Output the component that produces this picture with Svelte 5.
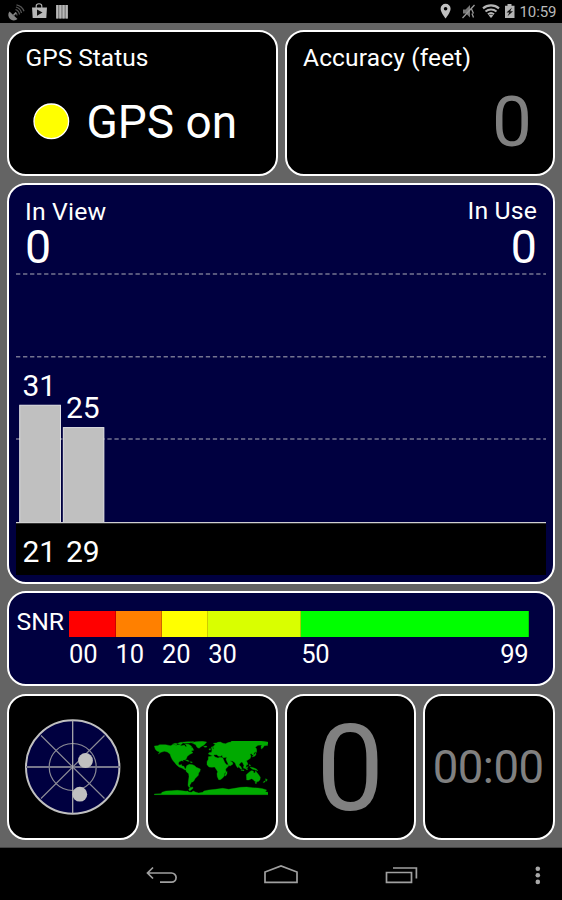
<script>
  const gridLines = [274, 356.8, 439];
  const satellites = [
    { id: '21', snr: '31', x: 19.7, width: 40.8, top: 405.2, textX: 22.4, labelY: 395.6 },
    { id: '29', snr: '25', x: 63.3, width: 40.6, top: 427.6, textX: 65.9, labelY: 418.4 }
  ];
  const scale = [
    { label: '00', color: '#ff0000', span: 46.5 },
    { label: '10', color: '#ff8000', span: 46.5 },
    { label: '20', color: '#ffff00', span: 46.3 },
    { label: '30', color: '#d9ff00', span: 92.9 },
    { label: '50', color: '#00ff00', span: 227.3, end: '99' }
  ];
</script>

<div class="screen">
  <header class="status">
    <svg width="80" height="23" viewBox="0 0 80 23">
      <g fill="none" stroke="#555" stroke-width="1.3">
        <path d="M15.5 12.5A4 4 0 0 1 17 15.5M15.5 9.5a6 6 0 0 1 4 5M16 7a8 8 0 0 1 5.5 6M16.500 4.800a10 10 0 0 1 7.500 6.500" />
      </g>
      <path d="M9.500 11.500A5.500 5.500 0 0 0 17.500 19zM13 14.500l2.500-2.500 1.200 1.200-2.500 2.500z" fill="#858585" />
      <path d="M36.200 8V6a2.800 2.300 0 0 1 5.600 0v2" fill="none" stroke="#b4b4b4" stroke-width="1.100" />
      <path d="M32 7.500h15l-.7 10.500H32.700z" fill="#b8b8b8" />
      <path d="M37 9.500v6.300l5.500-3.200z" fill="#111" />
      <path d="M56.200 5h11.600v13.500H56.200z" fill="#707070" />
      <path d="M56.200 5h2v13.500h-2zM59.300 5h2.100v13.500h-2.100zM62.500 5h2.100v13.500h-2.100zM65.700 5h2.100v13.500h-2.100z" fill="#b8b8b8" />
    </svg>
    <div class="status-right">
      <svg width="80" height="23" viewBox="438 0 80 23">
        <path fill-rule="evenodd" d="M444.600 3.800a5 5 0 0 0-5 5c0 3.700 5 9.700 5 9.700s5-6 5-9.700a5 5 0 0 0-5-5zm0 3.200a1.800 1.800 0 1 1 0 3.600 1.800 1.800 0 0 1 0-3.600z" fill="#c0c0c0" />
        <path d="M462 9.500h2.500l4.500-4.500v12.500l-4-4H462z" fill="#777" />
        <path d="M461.500 18L473.500 5M470.500 9l2 4.500M471 13.500l1.500 4" fill="none" stroke="#999" stroke-width="1.300" />
        <g fill="none" stroke="#b4b4b4" stroke-width="2.100">
          <path d="M482 8.400a12 12 0 0 1 16 0M484.500 11.500a8.500 8.500 0 0 1 11 0M487 14.300a4.600 4.600 0 0 1 6 0" />
        </g>
        <path d="M487.700 15.500a3.400 3.400 0 0 1 4.600 0L490 18z" fill="#b4b4b4" />
        <path d="M506.500 4h4v1.800h3V18h-9.500V5.800h2.500z" fill="#b4b4b4" />
        <path d="M511 7.500l-5.500 5h2.800l-1.800 3.700 5.500-5h-2.800z" fill="#111" />
      </svg>
      <span class="clock">10:59</span>
    </div>
  </header>

  <main>
    <div class="row two">
      <section class="panel gps">
        <div class="title"><span>GPS Status</span></div>
        <div class="state">
          <svg width="37" height="37" viewBox="0 0 37 37"><circle cx="18.300" cy="18.300" r="17.300" fill="#ffff00" stroke="#fff" stroke-width="1.300" /></svg>
          <span>GPS on</span>
        </div>
      </section>
      <section class="panel accuracy">
        <div class="title"><span>Accuracy (feet)</span></div>
        <div class="value">0</div>
      </section>
    </div>

    <section class="panel navy chart">
      <div class="counts">
        <div>
          <div class="title">In View</div>
          <div class="count">0</div>
        </div>
        <div class="in-use">
          <div class="title">In Use</div>
          <div class="count">0</div>
        </div>
      </div>
      <svg width="544" height="312" viewBox="9 270 544 312">
        {#each gridLines as y}
          <line x1="16" x2="546" y1={y} y2={y} stroke="#747490" stroke-width="1.400" stroke-dasharray="4.300 2.730" />
        {/each}
        <rect x="16" y="523" width="530" height="52" fill="#000" />
        {#each satellites as sat}
          <rect x={sat.x} y={sat.top} width={sat.width} height={522.5 - sat.top} fill="#c0c0c0" stroke="#ececec" stroke-width="0.900" />
          <text x={sat.textX} y={sat.labelY}>{sat.snr}</text>
          <text x={sat.textX} y="562.400">{sat.id}</text>
        {/each}
        <path d="M16 522.600H546" stroke="#d0d0d0" stroke-width="1.200" />
      </svg>
    </section>

    <section class="panel navy snr">
      <div class="name">SNR</div>
      <div class="scale">
        {#each scale as part}
          <div class="part" style="flex: {part.span} 0 0">
            <div class="swatch" style="background: {part.color}"></div>
            <div class="marks"><span>{part.label}</span>{#if part.end}<span>{part.end}</span>{/if}</div>
          </div>
        {/each}
      </div>
    </section>

    <div class="row four">
      <section class="panel tile">
        <svg width="96" height="96" viewBox="25 719 96 96">
          <circle cx="72.700" cy="767" r="46.700" fill="#000040" stroke="#c0c0c0" stroke-width="2" />
          <g fill="none" stroke="#8b8b96" stroke-width="1.200">
            <circle cx="72.700" cy="767" r="23.500" />
            <path d="M41 735.500L104.500 798.500M104.500 735.500L41 798.500" />
          </g>
          <path d="M26 767H120" stroke="#77778c" stroke-width="2" />
          <path d="M72.700 720V814" stroke="#b4b4b4" stroke-width="1.200" />
          <circle cx="85.500" cy="760.500" r="7.400" fill="#c0c0c0" />
          <circle cx="79.800" cy="794.200" r="7.400" fill="#c0c0c0" />
        </svg>
      </section>
      <section class="panel tile map">
        <svg width="114" height="56" viewBox="27 31 342 168">
          <g fill="#00aa00" stroke="#00aa00" stroke-width="1">
            <path d="M28 46l10-1 6-3 18 0 14 3 8-3 10 2 8-2 8 3 8-2 4 5 7-3 6 5 8 1 3 8-8 2 6 5-9 5-8 6-3 7-5 4-6 0 2 4-5-2-8 3-2 7 5 4 4-3 2 5 6 1 2 6 5 4-4 1-8-5-10-4-8-7-7-9-4-4-5-10-3-9-8-6-9-2-10 3-8 5 4-6-8-3-5-5z" />
            <path d="M82 41l8-3 8 1-4 4zM98 38l9-3 6 3-6 5zM108 35l20-2 18 0-12 4-16 1zM121 40l10 1 9 6-2 6-7-2-7-6z" />
            <path d="M138 36l14-3 20-1 13 2-5 6-4 4-8 4-6 5-6-3-4-8-9-4zM176 47l8-1 2 3-7 1z" />
            <path d="M119 87l8 1 6 4-5 0zM136 93l6 1-1 2-5-1z" />
            <path d="M125 105l8-4 10 1 6 3 5 5 12 5-1 7-4 5-1 7-5 5-5 5-3 6-4 4-4 1-2 5-3 3 1 5 2 2-5 0-3-6 1-12 2-14-1-9-7-6-2-8z" />
            <path d="M131 175l5-4 7-2 1 4-6 5-4 3zM190 70l2-4 8-1 0-5 6-6-2-6 7-7 8-6 7-1 8 4 8 1 6-3 8-1 5-5 11 0 5-3 14-2 10 1 12 2 15 1 14 1 12 2 14 2 9 2 0 4-10 0 2 4-11 1-4 6-5 4-1-9 4-3-13 1-8 6 4 5-1 7-7 5-1 6-4 0-2-4-5 1 3 6-2 7-6 4-5 3-3 1 5 8-3 5-4 0 1 6 4 7-5-4-4-10-3-7-4-2-6 7-4 11-5-6-4-10-8-5-7-1 7 5 2 5-9 6-4-3-6-12-2-5 2-6-10 1-4-4 1-5-5 5-6 0-6-5-7 0-3 5z" />
            <path d="M199 49l4-1 0 5 4 5-6 1zM193 54l4 0-1 4-4 0zM205 38l14-2 8 1-8 4-10 0zM245 39l10-4 3 2-9 5zM280 35l9-1 4 3-8 0z" />
            <path d="M190 78l12-2 5-1 3 4 9 3 6-2 8 1 3 7 4 9 5 5 7 0-2 5-8 8 1 9-5 5 0 7-6 7-6 4-5 0-4-9-1-9 2-6-5-8-4-6-8 1-9-1-6-7 0-9 4-7z" />
            <path d="M243 125l3-3 0 7-4 7-3-2zM322 79l3-5 4-3 3-5 1 5-3 5zM332 65l0-7 2 1 1 6z" />
            <path d="M280 102l6 4 5 8-4 1-6-7zM288 117l9 1 0 2-9-1zM295 108l6-6 3 2-3 9-5 0zM304 109l6-1-4 4 2 5-4-1zM316 109l9 2 9 4 5 5-7-2-9-2-6-4zM303 91l3 2 3 10-4-3-3-5zM314 101l3 4-4 1z" />
            <path d="M304 132l5-4 5-5 5-3 6 1 1 5 4 1 2-7 3 5 6 7 5 8-1 7-4 5-7 2-5-2-4-5-5-3-9 4-6 0z" />
            <path d="M330 155l5 0-2 5zM362 144l5 3-3 5-2-2zM358 151l3 1-4 4-2-1z" />
            <path d="M28 190l20-1 3-4 12-4 16-1 18-1 14 1 12 2 5-1 3 3 8 1 6-4 6 3 10 3 12-2 4-4 14-3 20-2 22-3 18 3 18-3 18-3 18-1 18 2 16 1 14 2 12 4-4 5 9 2 1 7H28z" />
          </g>
        </svg>
      </section>
      <section class="panel tile big">0</section>
      <section class="panel tile timer">00:00</section>
    </div>
  </main>

  <nav>
    <svg width="562" height="52" viewBox="0 848 562 52" fill="none" stroke="#a0a0a0" stroke-width="1.700">
      <path d="M153 867.500L147.500 873l5.500 5.500M147.500 873H171.500a4.600 4.600 0 0 1 0 9.200H160" />
      <path d="M265 882.300V872L281 866l16 6v10.300z" />
      <path d="M386.500 872.500h25v9.800h-25zM393 868h23.400v10.500" />
      <g fill="#a8a8a8" stroke="none">
        <circle cx="537.800" cy="868.700" r="2.300" />
        <circle cx="537.800" cy="875.300" r="2.300" />
        <circle cx="537.800" cy="881.900" r="2.300" />
      </g>
    </svg>
  </nav>
</div>

<style>
  .screen {
    width: 562px;
    height: 900px;
    display: flex;
    flex-direction: column;
    background: #646464;
    color: #fff;
    font-family: Roboto, sans-serif;
    line-height: 1;
    overflow: hidden;
  }
  svg { display: block; flex: none; }
  .status {
    height: 23px;
    display: flex;
    justify-content: space-between;
    background: #000;
  }
  .status-right { display: flex; }
  .clock {
    width: 43px;
    padding: 5px 0 0 0.500px;
    box-sizing: border-box;
    font-size: 15px;
    letter-spacing: -0.100px;
    color: #bababa;
  }
  main {
    height: 825px;
    box-sizing: border-box;
    padding: 7px 7px 8px;
    display: flex;
    flex-direction: column;
    gap: 7px;
    border-bottom: 1px solid #444;
  }
  .row { display: grid; gap: 7px; height: 146px; flex: none; }
  .two { grid-template-columns: 1fr 1fr; }
  .four { grid-template-columns: repeat(4, 1fr); margin-top: 1px; }
  .panel {
    box-sizing: border-box;
    min-width: 0;
    border: 2px solid #fff;
    border-radius: 19px;
    background: #000;
    overflow: hidden;
  }
  .navy { background: #000040; }
  .title { font-size: 24.500px; white-space: nowrap; }
  .gps, .accuracy { padding-top: 14px; }
  .gps { padding-left: 16.500px; }
  .accuracy { padding-left: 16.500px; padding-right: 21px; }
  .accuracy .title { letter-spacing: 0.150px; }
  .state {
    display: flex;
    margin: 28px 0 0 7.500px;
    font-size: 46px;
    white-space: nowrap;
    gap: 16.500px;
  }
  .state svg { margin-top: 4.500px; }
  .value { margin-top: 15.500px; font-size: 71px; color: #808080; text-align: right; }
  .chart { height: 401px; flex: none; }
  .counts {
    height: 85px;
    box-sizing: border-box;
    padding: 14.500px 16px 0 16px;
    display: flex;
    justify-content: space-between;
  }
  .counts .title { font-size: 24.800px; letter-spacing: 0.150px; }
  .count { margin-top: 0; font-size: 46.500px; }
  .in-use { text-align: right; }
  .in-use .title { margin-top: -1px; margin-bottom: 1px; }
  .chart text { font-size: 30px; fill: #fff; }
  .snr { height: 95px; flex: none; display: flex; padding: 18px 24.500px 0 7.500px; }
  .name { width: 52.500px; margin-top: -1px; font-size: 24.700px; }
  .scale { flex: 1; display: flex; }
  .part { min-width: 0; }
  .swatch { height: 26px; box-shadow: inset -1px 0 rgba(0, 0, 0, 0.200); }
  .marks { display: flex; justify-content: space-between; padding: 4.500px 0 0 0; font-size: 25.500px; letter-spacing: -0.200px; }
  .tile { display: flex; align-items: center; justify-content: center; }
  .map svg { margin: 4px 2px 0 0; }
  .big { padding-top: 5px; font-size: 121px; color: #808080; }
  .timer { padding: 1px 2px 0 0; font-size: 45.500px; letter-spacing: -0.500px; color: #808080; }
  nav { height: 52px; background: #000; }
</style>
